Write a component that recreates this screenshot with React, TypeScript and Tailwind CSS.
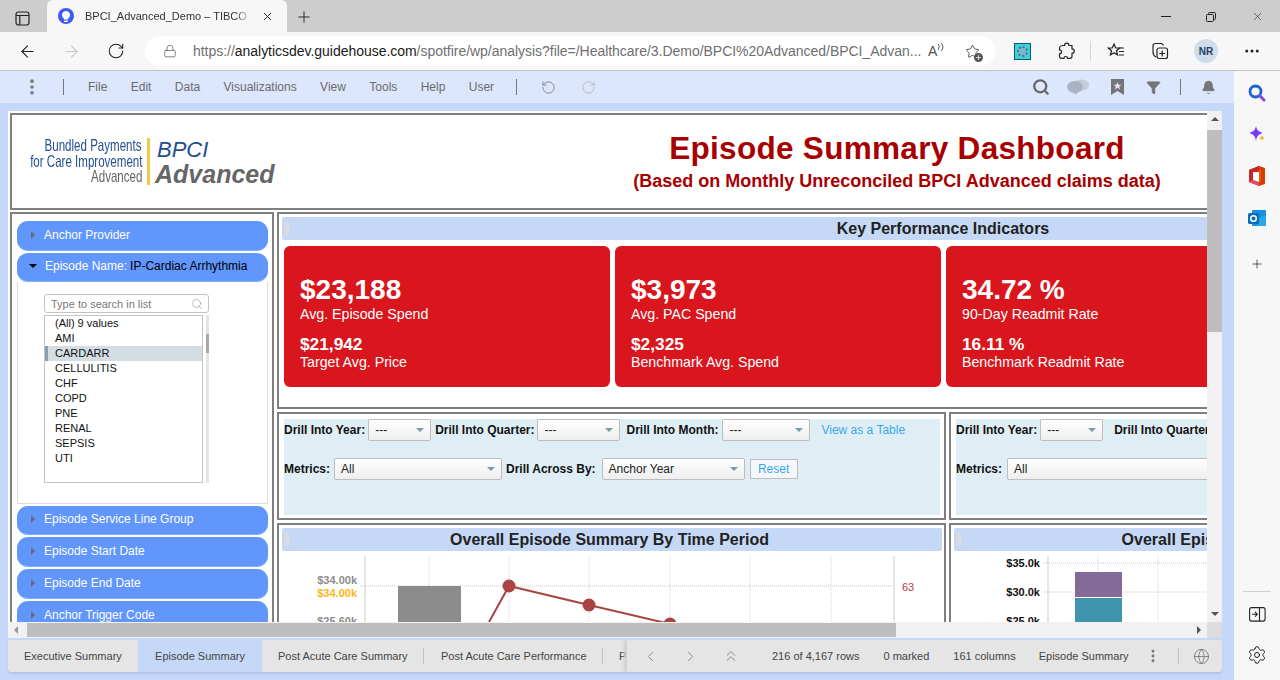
import {
  ArrowLeft,
  ArrowRight,
  Bell,
  ChevronLeft,
  ChevronRight,
  ChevronsUp,
  Filter,
  Globe,
  Lock,
  MoreHorizontal,
  MoreVertical,
  Plus,
  RotateCcw,
  RotateCw,
  Search,
  Settings,
  Star,
  X,
} from "lucide-react";

const FONT = "font-['Liberation_Sans',Arial,sans-serif]";
const MENU = ["File", "Edit", "Data", "Visualizations", "View", "Tools", "Help", "User"];
const LIST = ["(All) 9 values", "AMI", "CARDARR", "CELLULITIS", "CHF", "COPD", "PNE", "RENAL", "SEPSIS", "UTI"];

function Caret({ open }: { open?: boolean }) {
  if (open) {
    return <span className="mr-[8px] h-0 w-0 border-x-[4px] border-t-[4px] border-x-transparent border-t-black" />;
  }
  return <span className="mr-[9px] ml-[2px] h-0 w-0 border-y-[4px] border-l-[4px] border-y-transparent border-l-[#6b6b6b]" />;
}

function Pill({ label, value, height, open }: { label: string; value?: string; height: string; open?: boolean }) {
  return (
    <div className={`flex w-[251px] items-center rounded-[11px] border-b border-[#7db0ff] bg-[#6196fd] pb-[2px] pl-[12px] text-[12px] text-white ${height}`}>
      <Caret open={open} />
      <span>{label}</span>
      {value && <span className="ml-[3px] text-black">{value}</span>}
    </div>
  );
}

function Select({ value, width, className = "" }: { value: string; width: string; className?: string }) {
  return (
    <div className={`flex h-[22px] shrink-0 items-center justify-between rounded-[2px] border border-[#bdbdbd] bg-gradient-to-b from-white to-[#eeeeee] pr-[6px] pl-[6px] text-[12px] text-[#222] ${width} ${className}`}>
      <span>{value}</span>
      <span className="h-0 w-0 border-x-[4px] border-t-[4px] border-x-transparent border-t-[#7d9aa8]" />
    </div>
  );
}

function Label({ children, className = "" }: { children: string; className?: string }) {
  return <span className={`shrink-0 text-[12px] font-bold whitespace-nowrap text-[#111] ${className}`}>{children}</span>;
}

function TitleBar({ children, className = "" }: { children: string; className?: string }) {
  return (
    <div className={`relative flex h-[23px] items-center justify-center rounded-[2px] bg-[#c5d9f7] text-[16px] font-bold text-[#222] ${className}`}>
      <span className="absolute top-[4px] left-[3px] h-[15px] w-[4px] bg-[#dcdcdc]" />
      {children}
    </div>
  );
}

function KpiCard({ main, mainLabel, sub, subLabel }: { main: string; mainLabel: string; sub: string; subLabel: string }) {
  return (
    <div className="h-[141px] w-[326px] shrink-0 rounded-[6px] bg-[#d9161d] pt-[27px] pl-[16px] text-white">
      <div className="text-[28px] leading-[34px] font-bold">{main}</div>
      <div className="text-[14.2px] leading-[15px]">{mainLabel}</div>
      <div className="mt-[12px] text-[17.3px] leading-[20px] font-bold">{sub}</div>
      <div className="text-[14.2px] leading-[17px]">{subLabel}</div>
    </div>
  );
}

function OfficeIcon() {
  return (
    <svg width="18" height="20" viewBox="0 0 18 20">
      <path d="M11 0 1 4v12l10 4 6-2V2z" fill="#d83b01" />
      <path d="M11 0 1 4v12l4-2V6l6-2z" fill="#c4262e" />
      <path d="M5 14 1 16l10 4v-3z" fill="#e8467c" />
      <path d="M11 4h2v12h-2z" fill="#ea5a0c" />
      <path d="M5 6h6v10l-6-2z" fill="#ffffff" />
    </svg>
  );
}

function OutlookIcon() {
  return (
    <svg width="19" height="19" viewBox="0 0 19 19">
      <rect x="4" y="1" width="14" height="16" rx="1" fill="#1490df" />
      <path d="M9 10 18 6v10a1 1 0 0 1-1 1H9z" fill="#28a8ea" />
      <rect x="0" y="4" width="11" height="11" rx="1.5" fill="#0a6cbd" />
      <circle cx="5.5" cy="9.5" r="2.8" fill="none" stroke="#fff" strokeWidth="1.5" />
    </svg>
  );
}

function BrowserBar() {
  return (
    <>
      <div className="flex h-[32px] items-end bg-[#cdcdcd]">
        <svg className="mt-[-2px] mb-[6px] ml-[15px]" width="15" height="15" viewBox="0 0 15 15" fill="none" stroke="#222" strokeWidth="1.2">
          <rect x="1" y="1" width="13" height="13" rx="2.5" />
          <path d="M1 4.500h13M4.800 4.500V14" />
        </svg>
        <div className="ml-[17px] flex h-[32px] w-[240px] items-center rounded-t-[6px] bg-[#f7f7f7] pl-[11px]">
          <span className="flex h-[16px] w-[16px] items-center justify-center rounded-full bg-[#3d5af1]">
            <svg width="8" height="11" viewBox="0 0 8 11" fill="#fff">
              <path d="M4 0a4 4 0 0 1 2.200 7.300V8.500H1.800V7.300A4 4 0 0 1 4 0z" />
              <path d="M2.200 9.500h3.600V11H2.200z" />
            </svg>
          </span>
          <span className="ml-[11px] w-[167px] overflow-hidden text-[11px] whitespace-nowrap text-[#333] [mask-image:linear-gradient(90deg,black_90%,transparent)]">BPCI_Advanced_Demo – TIBCO Spotfire</span>
          <X size={13} strokeWidth={1.800} className="ml-[9px] text-[#222]" />
        </div>
        <Plus size={18} strokeWidth={1.200} className="mb-[6px] ml-[8px] text-[#222]" />
        <div className="mb-[9px] ml-auto flex items-center gap-[35px] pr-[16px] text-[#222]">
          <span className="h-px w-[10px] bg-[#222]" />
          <svg width="10" height="10" viewBox="0 0 10 10" fill="none" stroke="#222">
            <rect x="0.500" y="2.500" width="7" height="7" rx="1" />
            <path d="M2.500 2.500V1.500a1 1 0 0 1 1-1h5a1 1 0 0 1 1 1v5a1 1 0 0 1-1 1H7.500" />
          </svg>
          <X size={13} strokeWidth={1.100} />
        </div>
      </div>
      <div className="flex h-[39px] items-center border-b border-[#c4c4c4] bg-[#f7f7f7]">
        <ArrowLeft size={19} strokeWidth={1.400} className="ml-[18px] text-[#222]" />
        <ArrowRight size={19} strokeWidth={1.400} className="ml-[25px] text-[#c8c8c8]" />
        <RotateCw size={18} strokeWidth={1.400} className="ml-[26px] text-[#222]" />
        <div className="ml-[20px] flex h-[30px] w-[850px] items-center rounded-full bg-white pl-[18px] text-[14px]">
          <Lock size={14} strokeWidth={1.200} className="text-[#555]" />
          <span className="ml-[16px] w-[728px] shrink-0 overflow-hidden tracking-[-0.03px] whitespace-nowrap text-[#6f6f6f]">
            https://<span className="text-[#1a1a1a]">analyticsdev.guidehouse.com</span>/spotfire/wp/analysis?file=/Healthcare/3.Demo/BPCI%20Advanced/BPCI_Advan...
          </span>
          <span className="ml-[7px] text-[14px] text-[#555]">A</span>
          <svg className="mb-[8px]" width="7" height="8" viewBox="0 0 7 8" fill="none" stroke="#555">
            <path d="M1 1c1.500 1.500 1.500 3.500 0 6M4 0c2.500 2.500 2.500 5.500 0 8" />
          </svg>
          <span className="relative ml-[21px]">
            <Star size={15} strokeWidth={1.300} className="text-[#333]" />
            <span className="absolute right-[-3px] bottom-[-3px] flex h-[9px] w-[9px] items-center justify-center rounded-full bg-[#555]">
              <Plus size={7} strokeWidth={2.500} className="text-white" />
            </span>
          </span>
        </div>
        <span className="ml-[19px] flex h-[17px] w-[17px] items-center justify-center border border-[#0e5a68] bg-[#38d3de]">
          <span className="h-[11px] w-[11px] rounded-full border-[2px] border-dotted border-[#2a7f95] bg-[#7fb7c9]" />
        </span>
        <svg className="ml-[27px]" width="17" height="18" viewBox="0 0 17 18" fill="none" stroke="#222" strokeWidth="1.200">
          <path d="M5 3.500h1.500c0-3.300 4.500-3.300 4.500 0H14v3.300c3 0 3 4.500 0 4.500v3c0 1.200-.8 2-2 2H9.500c0-2.400-3.500-2.400-3.500 0H3.500c-1.200 0-2-.8-2-2v-2.500c2.700 0 2.700-4 0-4V6c0-1.500 2-2.500 3.500-2.500z" />
        </svg>
        <span className="ml-[15px] h-[20px] w-px bg-[#d4d4d4]" />
        <svg className="ml-[16px]" width="18" height="18" viewBox="0 0 18 18" fill="none" stroke="#222" strokeWidth="1.200">
          <path d="M7 2 8.700 6h4L9.500 8.700l1.100 4.300L7 10.700 3.400 13l1.100-4.300L1.300 6h4z" />
          <path d="M12 6h5M12 9.500h5M12 13h5" />
        </svg>
        <svg className="ml-[26px]" width="18" height="18" viewBox="0 0 18 18" fill="none" stroke="#222" strokeWidth="1.200">
          <path d="M5 15C3 14 2 12 2 10V4c0-1.500 1-2.500 2.500-2.500H10c1.500 0 2 .5 2.500 2" />
          <rect x="6" y="6" width="10.500" height="10.500" rx="2" />
          <path d="M11.200 8.500v6M8.200 11.500h6" />
        </svg>
        <span className="ml-[25px] flex h-[24px] w-[24px] items-center justify-center rounded-full bg-[#cfdcea] text-[10px] font-bold text-[#24405f]">NR</span>
        <MoreHorizontal size={18} strokeWidth={2} className="ml-[25px] text-[#222]" />
      </div>
    </>
  );
}

function Toolbar() {
  return (
    <div className="flex h-[32px] items-center bg-[#dce6fc] text-[12px] text-[#6b6b6b]">
      <MoreVertical size={20} strokeWidth={2.400} className="ml-[22px] text-[#7a7a7a]" />
      <span className="ml-[21px] h-[16px] w-px bg-[#777]" />
      <div className="ml-[24px] flex gap-[23.4px]">
        {MENU.map((m) => (
          <span key={m}>{m}</span>
        ))}
      </div>
      <span className="ml-[22px] h-[16px] w-px bg-[#777]" />
      <RotateCcw size={15} strokeWidth={1.400} className="ml-[24px] text-[#7e7e7e]" />
      <RotateCw size={15} strokeWidth={1.400} className="ml-[25px] text-[#b5b5b5]" />
      <Search size={18} strokeWidth={3} className="ml-auto text-[#666]" />
      <svg className="ml-[16px]" width="24" height="16" viewBox="0 0 24 16" fill="#a9b3c4">
        <ellipse cx="15" cy="6" rx="8" ry="5.500" fill="#c4ccda" />
        <ellipse cx="9" cy="8" rx="8" ry="6" />
        <path d="M6 12h6l-2 4z" />
      </svg>
      <svg className="ml-[21px]" width="13" height="16" viewBox="0 0 13 16">
        <path d="M0 0h13v16l-6.500-4L0 16z" fill="#757575" />
        <path d="M6.500 3 7.600 5.800h2.900L8.200 7.600l.9 2.900-2.600-1.700-2.600 1.700.9-2.900-2.300-1.800h2.900z" fill="#dce6fc" />
      </svg>
      <Filter size={15} fill="#757575" strokeWidth={1.500} className="ml-[22px] text-[#757575]" />
      <span className="ml-[19px] h-[16px] w-px bg-[#777]" />
      <Bell size={15} fill="#757575" strokeWidth={1.500} className="mr-[18px] ml-[20px] text-[#757575]" />
    </div>
  );
}

function Logo() {
  return (
    <div className="flex w-[262px] shrink-0 items-center">
      <div className="flex w-[130px] flex-col items-end text-[16.5px] leading-[15.5px] text-[#24508f]">
        <div className="origin-right scale-x-[0.7] whitespace-nowrap">Bundled Payments</div>
        <div className="origin-right scale-x-[0.7] whitespace-nowrap">for Care Improvement</div>
        <div className="origin-right scale-x-[0.7] whitespace-nowrap text-[#666]">Advanced</div>
      </div>
      <div className="mr-[5px] ml-[5px] h-[47px] w-[3px] bg-[#f4c945]" />
      <div className="w-[119px] italic">
        <div className="ml-[2px] text-[22px] leading-[24px] text-[#1f4e8f]">BPCI</div>
        <div className="text-[25px] leading-[24px] font-bold text-[#666]">Advanced</div>
      </div>
    </div>
  );
}

function Sidebar() {
  return (
    <div className="flex w-[251px] flex-col gap-[2px] overflow-hidden">
      <Pill label="Anchor Provider" height="h-[30px]" />
      <div>
        <Pill label="Episode Name:" value="IP-Cardiac Arrhythmia" height="h-[29px]" open />
        <div className="h-[222px] border border-t-0 border-[#dcdcdc] pt-[12px] pl-[26px]">
          <div className="flex h-[19px] w-[165px] items-center justify-between rounded-[3px] border border-[#c4c4c4] pt-[1px] pr-[5px] pl-[6px] text-[11px] text-[#777]">
            Type to search in list
            <Search size={12} strokeWidth={1.300} className="text-[#999]" />
          </div>
          <div className="mt-[2px] flex gap-[3px]">
            <div className="h-[168px] w-[159px] border border-[#c4c4c4] text-[11px]">
              {LIST.map((v) => (
                <div
                  key={v}
                  className={`h-[15px] pl-[10px] leading-[15px] text-[#111] ${v === "CARDARR" ? "border-l-[3px] border-[#8aa1ad] bg-[#d4dee2] !pl-[7px]" : ""}`}
                >
                  {v}
                </div>
              ))}
            </div>
            <div className="h-[168px] w-[3px] bg-[#e4e4e4] pt-[19px]">
              <div className="h-[19px] w-[3px] bg-[#a8a8a8]" />
            </div>
          </div>
        </div>
      </div>
      <div className="flex flex-col gap-[2px]">
        <Pill label="Episode Service Line Group" height="h-[29px]" />
        <Pill label="Episode Start Date" height="h-[30px]" />
        <Pill label="Episode End Date" height="h-[30px]" />
        <Pill label="Anchor Trigger Code" height="h-[30px]" />
      </div>
    </div>
  );
}

function DrillLeft() {
  return (
    <div className="mt-[5px] ml-[4px] h-[96px] w-[656px] bg-[#dfeef5]">
      <div className="flex items-center">
        <Label>Drill Into Year:</Label>
        <Select value="---" width="w-[63px]" className="ml-[3px]" />
        <Label className="ml-[4px]">Drill Into Quarter:</Label>
        <Select value="---" width="w-[83px]" className="ml-[3px]" />
        <Label className="ml-[6px]">Drill Into Month:</Label>
        <Select value="---" width="w-[88px]" className="ml-[4px]" />
        <span className="ml-[11px] text-[12px] text-[#3aa7ec]">View as a Table</span>
      </div>
      <div className="mt-[17px] flex items-center">
        <Label>Metrics:</Label>
        <Select value="All" width="w-[168px]" className="ml-[4px]" />
        <Label className="ml-[4px]">Drill Across By:</Label>
        <Select value="Anchor Year" width="w-[143px]" className="ml-[6px]" />
        <span className="ml-[5px] flex h-[20px] w-[48px] items-center justify-center border border-[#bdbdbd] bg-[#f4f7f9] text-[12px] text-[#3aa7ec]">Reset</span>
      </div>
    </div>
  );
}

function DrillRight() {
  return (
    <div className="mt-[5px] ml-[4px] h-[96px] w-[500px] bg-[#dfeef5]">
      <div className="flex items-center">
        <Label>Drill Into Year:</Label>
        <Select value="---" width="w-[63px]" className="ml-[3px]" />
        <Label className="ml-[11px]">Drill Into Quarter:</Label>
      </div>
      <div className="mt-[17px] flex items-center">
        <Label>Metrics:</Label>
        <Select value="All" width="w-[300px]" className="ml-[5px]" />
      </div>
    </div>
  );
}

function ChartLeft() {
  return (
    <svg width="660" height="80" viewBox="282 552 660 80" className="mt-[1px] block">
      <path d="M365 556V632M894 556V632" stroke="#cccccc" />
      <path d="M360 586H894" stroke="#c8c8c8" strokeDasharray="1 1" />
      <path d="M429 556V632M509 556V632M589 556V632M670 556V632M750 556V632M831 556V632" stroke="#d4d4d4" strokeDasharray="1 1" />
      <rect x="398" y="586" width="63" height="46" fill="#8c8c8c" />
      <path d="M489 622 509 586 589 605 670 624" fill="none" stroke="#a94442" strokeWidth="2" />
      <circle cx="509" cy="586" r="6.500" fill="#a94442" />
      <circle cx="589" cy="605" r="6.500" fill="#a94442" />
      <circle cx="670" cy="624" r="6.500" fill="#a94442" />
      <g fontSize="11" fontWeight="700" textAnchor="end">
        <text x="357" y="584" fill="#8c8c8c">$34.00k</text>
        <text x="357" y="597" fill="#fdb515">$34.00k</text>
        <text x="357" y="625" fill="#8c8c8c">$25.60k</text>
      </g>
      <text x="902" y="591" fontSize="11" fill="#b5403f">63</text>
    </svg>
  );
}

function ChartRight() {
  return (
    <svg width="600" height="80" viewBox="954 552 600 80" className="mt-[1px] block">
      <path d="M1048 556V632" stroke="#cccccc" />
      <path d="M1043 563H1400M1043 592H1400" stroke="#c8c8c8" strokeDasharray="1 1" />
      <path d="M1098 556V632M1158 556V632" stroke="#d4d4d4" strokeDasharray="1 1" />
      <rect x="1075" y="572" width="47" height="25" fill="#846a99" />
      <rect x="1075" y="598" width="47" height="34" fill="#3f95ae" />
      <g fontSize="11" fontWeight="700" textAnchor="end" fill="#111">
        <text x="1040" y="567">$35.0k</text>
        <text x="1040" y="596">$30.0k</text>
        <text x="1040" y="625">$25.0k</text>
      </g>
    </svg>
  );
}

function Dashboard() {
  return (
    <div className="flex h-full w-[1700px] flex-col gap-[2px] pt-[2px] pl-[2px]">
      <div className="flex h-[97px] shrink-0 items-center border-2 border-[#7f7f7f]">
        <Logo />
        <div className="flex w-[1246px] shrink-0 flex-col items-center pb-[2px]">
          <div className="text-[31.5px] leading-[38px] font-bold tracking-[0.3px] text-[#a80000]">Episode Summary Dashboard</div>
          <div className="mt-[2px] text-[18px] leading-[24px] font-bold text-[#a80000]">(Based on Monthly Unreconciled BPCI Advanced claims data)</div>
        </div>
      </div>
      <div className="flex min-h-0 flex-1 gap-[3px]">
        <div className="w-[264px] shrink-0 overflow-hidden border-2 border-b-0 border-[#7f7f7f] pt-[7px] pl-[5px]">
          <Sidebar />
        </div>
        <div className="flex min-w-0 flex-1 flex-col gap-[3px]">
          <div className="h-[197px] shrink-0 border-2 border-[#7f7f7f] px-[3px] pt-[3px]">
            <TitleBar className="w-[1322px]">Key Performance Indicators</TitleBar>
            <div className="mt-[6px] ml-[2px] flex gap-[5px]">
              <KpiCard main="$23,188" mainLabel="Avg. Episode Spend" sub="$21,942" subLabel="Target Avg. Price" />
              <KpiCard main="$3,973" mainLabel="Avg. PAC Spend" sub="$2,325" subLabel="Benchmark Avg. Spend" />
              <KpiCard main="34.72 %" mainLabel="90-Day Readmit Rate" sub="16.11 %" subLabel="Benchmark Readmit Rate" />
            </div>
          </div>
          <div className="flex h-[108px] shrink-0 gap-[3px]">
            <div className="w-[669px] shrink-0 border-2 border-[#7f7f7f] pl-[1px]">
              <DrillLeft />
            </div>
            <div className="w-[612px] shrink-0 border-2 border-[#7f7f7f] pl-[1px]">
              <DrillRight />
            </div>
          </div>
          <div className="flex min-h-0 flex-1 gap-[3px]">
            <div className="w-[669px] shrink-0 overflow-hidden border-2 border-b-0 border-[#7f7f7f] px-[3px] pt-[3px]">
              <TitleBar className="w-[660px] pr-[5px]">Overall Episode Summary By Time Period</TitleBar>
              <ChartLeft />
            </div>
            <div className="w-[612px] shrink-0 overflow-hidden border-2 border-b-0 border-[#7f7f7f] px-[3px] pt-[3px]">
              <TitleBar className="w-[602px] pr-[8px]">Overall Episode Summary By Drill</TitleBar>
              <ChartRight />
            </div>
          </div>
        </div>
      </div>
    </div>
  );
}

function Scrollbars({ children }: { children: React.ReactNode }) {
  return (
    <div className="flex h-[527px] flex-col bg-white">
      <div className="flex min-h-0 flex-1">
        <div className="min-w-0 flex-1 overflow-hidden">{children}</div>
        <div className="flex w-[15px] shrink-0 flex-col items-center bg-[#f1f1f1]">
          <span className="mt-[6px] h-0 w-0 border-x-[4px] border-b-[4px] border-x-transparent border-b-[#555]" />
          <span className="mt-[9px] h-[202px] w-[15px] bg-[#bebebe]" />
          <span className="mt-auto mb-[6px] h-0 w-0 border-x-[4px] border-t-[4px] border-x-transparent border-t-[#555]" />
        </div>
      </div>
      <div className="flex h-[16px] shrink-0 items-center bg-[#f1f1f1]">
        <span className="ml-[6px] h-0 w-0 border-y-[4px] border-r-[4px] border-y-transparent border-r-[#999]" />
        <span className="ml-[9px] h-[14px] w-[869px] bg-[#bebebe]" />
        <span className="mr-[6px] ml-auto h-0 w-0 border-y-[4px] border-l-[4px] border-y-transparent border-l-[#555]" />
        <span className="h-[16px] w-[15px] bg-[#dcdcdc]" />
      </div>
    </div>
  );
}

function BottomTabs() {
  return (
    <div className="mt-[2px] flex h-[32px] items-stretch overflow-hidden rounded-b-[3px] bg-[#e5e5e5] text-[11px] text-[#444] shadow-[0_2px_2px_#b3c4e6]">
      <span className="flex w-[130px] shrink-0 items-center pl-[16px]">Executive Summary</span>
      <span className="flex w-[124px] shrink-0 items-center justify-center rounded-[2px] bg-[#c5d9f7]">Episode Summary</span>
      <span className="flex w-[161px] shrink-0 items-center pl-[16px]">Post Acute Care Summary</span>
      <span className="my-[8px] w-px shrink-0 bg-[#c4c4c4]" />
      <span className="flex w-[178px] shrink-0 items-center pl-[17px] whitespace-nowrap">Post Acute Care Performance</span>
      <span className="my-[8px] w-px shrink-0 bg-[#c4c4c4]" />
      <span className="flex w-[24px] shrink-0 items-center pl-[16px]">P</span>
      <div className="flex flex-1 items-center shadow-[-3px_0_3px_#cfcfcf]">
        <ChevronLeft size={17} strokeWidth={1.300} className="ml-[15px] text-[#888]" />
        <ChevronRight size={17} strokeWidth={1.300} className="ml-[23px] text-[#888]" />
        <ChevronsUp size={18} strokeWidth={1.300} className="ml-[23px] text-[#888]" />
        <span className="ml-[32px]">216 of 4,167 rows</span>
        <span className="ml-[24px]">0 marked</span>
        <span className="ml-[24px]">161 columns</span>
        <span className="ml-[23px]">Episode Summary</span>
        <MoreVertical size={16} strokeWidth={2.400} className="ml-[16px] text-[#777]" />
        <span className="ml-[17px] h-[16px] w-px bg-[#c4c4c4]" />
        <Globe size={17} strokeWidth={1.200} className="ml-[14px] text-[#777]" />
      </div>
    </div>
  );
}

function EdgeSidebar() {
  return (
    <div className="flex w-[46px] shrink-0 flex-col items-center bg-[#f7f7f7]">
      <svg className="mt-[13px]" width="18" height="18" viewBox="0 0 18 18" fill="none">
        <circle cx="7.500" cy="7.500" r="5.500" stroke="#1a62d6" strokeWidth="2.800" />
        <path d="M11.800 11.800 16 16" stroke="#8a45e0" strokeWidth="3" strokeLinecap="round" />
      </svg>
      <svg className="mt-[23px]" width="18" height="18" viewBox="0 0 18 18">
        <path d="M8 1c.8 4 2.300 5.500 7 7-4.700 1.500-6.200 3-7 8-.8-5-2.300-6.500-7-8 4.700-1.500 6.200-3 7-7z" fill="#7a3cf5" />
        <path d="M14 10c.3 1.600.9 2.300 3 3-2.100.7-2.700 1.400-3 3-.3-1.600-.9-2.300-3-3 2.100-.7 2.700-1.400 3-3z" fill="#f9b71c" />
      </svg>
      <span className="mt-[23px] flex">
        <OfficeIcon />
      </span>
      <span className="mt-[23px] flex">
        <OutlookIcon />
      </span>
      <Plus size={14} strokeWidth={1.300} className="mt-[29px] text-[#333]" />
      <span className="mt-[320px] h-px w-[28px] bg-[#cfcfcf]" />
      <svg className="mt-[15px]" width="17" height="15" viewBox="0 0 17 15" fill="none" stroke="#222" strokeWidth="1.100">
        <rect x="0.600" y="0.600" width="15.500" height="13.500" rx="2" />
        <path d="M10.500.6v13.500M3 7.300h5M6 5l2.300 2.300L6 9.600" />
      </svg>
      <Settings size={20} strokeWidth={1.200} className="mt-[23px] text-[#222]" />
    </div>
  );
}

export default function App() {
  return (
    <div className={`flex h-[680px] w-[1280px] flex-col overflow-hidden bg-white ${FONT}`}>
      <BrowserBar />
      <div className="flex min-h-0 flex-1">
        <div className="min-w-0 flex-1 bg-[#c5d8f9]">
          <Toolbar />
          <div className="pt-[8px] pr-[12px] pl-[8px]">
            <Scrollbars>
              <Dashboard />
            </Scrollbars>
            <BottomTabs />
          </div>
        </div>
        <EdgeSidebar />
      </div>
    </div>
  );
}
